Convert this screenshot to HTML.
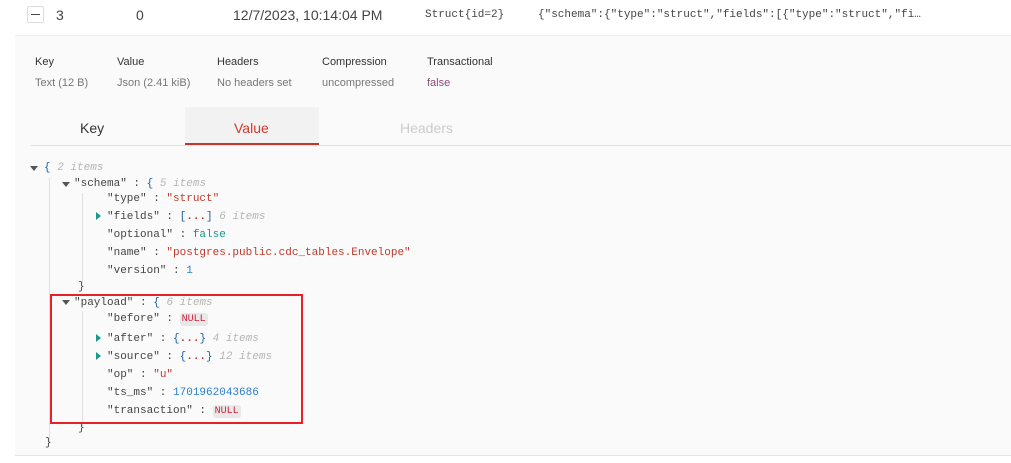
<!DOCTYPE html>
<html><head><meta charset="utf-8"><style>
*{margin:0;padding:0;box-sizing:border-box}
body{width:1011px;height:463px;background:#fff;position:relative;overflow:hidden;font-family:"Liberation Sans",sans-serif}
.a{position:absolute;white-space:pre}
.panel{position:absolute;left:15px;top:35px;width:996px;height:421px;background:#fafafa;border-top:1px solid #ececec;border-bottom:1px solid #e4e4e4}
.m{font-family:"Liberation Mono",monospace;font-size:11px;color:#444}
.s{color:#c0392b}
.b{color:#16968a}
.n{color:#2b7fd0}
.g{color:#b5b5b5;font-style:italic}
.br{color:#1a5fa0}
.d{color:#c0392b;font-weight:bold}
.null{background:#e8e8e8;color:#d0213a;border-radius:3px;padding:1px 2px;font-size:10px}
.tri{position:absolute;width:0;height:0}
.dn{border-left:4px solid transparent;border-right:4px solid transparent;border-top:5px solid #555}
.rt{border-top:4px solid transparent;border-bottom:4px solid transparent;border-left:5px solid #1a9a8c}
.vl{position:absolute;width:1px;background:#e0e0e0}
.lab{font-size:11px;color:#333}
.val{font-size:11px;color:#777}
</style></head><body>
<div class="a" style="left:27px;top:6px;width:17px;height:17px;border:1px solid #ddd;border-radius:2px;background:#fff"></div>
<div class="a" style="left:31px;top:14px;width:9px;height:1px;background:#444"></div>
<div class="a" style="left:56px;top:7px;font-size:14px;color:#444">3</div>
<div class="a" style="left:136px;top:7px;font-size:14px;color:#444">0</div>
<div class="a" style="left:233px;top:7px;font-size:14px;color:#444">12/7/2023, 10:14:04 PM</div>
<div class="a m" style="left:425px;top:9px;font-size:11px">Struct{id=2}</div>
<div class="a m" style="left:538px;top:9px;font-size:11px">{"schema":{"type":"struct","fields":[{"type":"struct","fi…</div>
<div class="panel"></div>
<div class="a lab" style="left:35px;top:56px">Key</div>
<div class="a val" style="left:35px;top:77px">Text (12 B)</div>
<div class="a lab" style="left:117px;top:56px">Value</div>
<div class="a val" style="left:117px;top:77px">Json (2.41 kiB)</div>
<div class="a lab" style="left:217px;top:56px">Headers</div>
<div class="a val" style="left:217px;top:77px">No headers set</div>
<div class="a lab" style="left:322px;top:56px">Compression</div>
<div class="a val" style="left:322px;top:77px">uncompressed</div>
<div class="a lab" style="left:427px;top:56px">Transactional</div>
<div class="a val" style="left:427px;top:77px;color:#8a4a7a">false</div>
<div class="a" style="left:31px;top:145px;width:980px;height:1px;background:#e2e2e2"></div>
<div class="a" style="left:185px;top:107px;width:134px;height:38px;background:#f2f2f2"></div>
<div class="a" style="left:185px;top:143px;width:134px;height:2px;background:#c0392b"></div>
<div class="a" style="left:80px;top:120px;font-size:14px;color:#333">Key</div>
<div class="a" style="left:234px;top:120px;font-size:14px;color:#d0392b">Value</div>
<div class="a" style="left:400px;top:120px;font-size:14px;color:#ccc">Headers</div>

<div class="vl" style="left:49px;top:178px;height:262px"></div>
<div class="vl" style="left:82px;top:193px;height:90px"></div>
<div class="vl" style="left:82px;top:311px;height:115px"></div>

<div class="tri dn" style="left:30px;top:166px"></div>
<div class="a m" style="left:44px;top:162px"><span class="br">{</span> <span class="g">2 items</span></div>
<div class="tri dn" style="left:62px;top:182px"></div>
<div class="a m" style="left:74px;top:178px">"schema" : <span class="br">{</span> <span class="g">5 items</span></div>
<div class="a m" style="left:107px;top:193px">"type" : <span class="s">"struct"</span></div>
<div class="tri rt" style="left:96px;top:212px"></div>
<div class="a m" style="left:107px;top:211px">"fields" : <span class="br">[</span><span class="d">...</span><span class="br">]</span> <span class="g">6 items</span></div>
<div class="a m" style="left:107px;top:229px">"optional" : <span class="b">false</span></div>
<div class="a m" style="left:107px;top:247px">"name" : <span class="s">"postgres.public.cdc_tables.Envelope"</span></div>
<div class="a m" style="left:107px;top:265px">"version" : <span class="n">1</span></div>
<div class="a m" style="left:78px;top:281px">}</div>
<div class="tri dn" style="left:62px;top:300px"></div>
<div class="a m" style="left:74px;top:297px">"payload" : <span class="br">{</span> <span class="g">6 items</span></div>
<div class="a m" style="left:107px;top:313px">"before" : <span class="null">NULL</span></div>
<div class="tri rt" style="left:96px;top:334px"></div>
<div class="a m" style="left:107px;top:333px">"after" : <span class="br">{</span><span class="d">...</span><span class="br">}</span> <span class="g">4 items</span></div>
<div class="tri rt" style="left:96px;top:352px"></div>
<div class="a m" style="left:107px;top:351px">"source" : <span class="br">{</span><span class="d">...</span><span class="br">}</span> <span class="g">12 items</span></div>
<div class="a m" style="left:107px;top:369px">"op" : <span class="s">"u"</span></div>
<div class="a m" style="left:107px;top:387px">"ts_ms" : <span class="n">1701962043686</span></div>
<div class="a m" style="left:107px;top:405px">"transaction" : <span class="null">NULL</span></div>
<div class="a m" style="left:78px;top:422px">}</div>
<div class="a m" style="left:45px;top:437px">}</div>
<div class="a" style="left:50px;top:294px;width:253px;height:130px;border:2px solid #e8202a"></div>
</body></html>
